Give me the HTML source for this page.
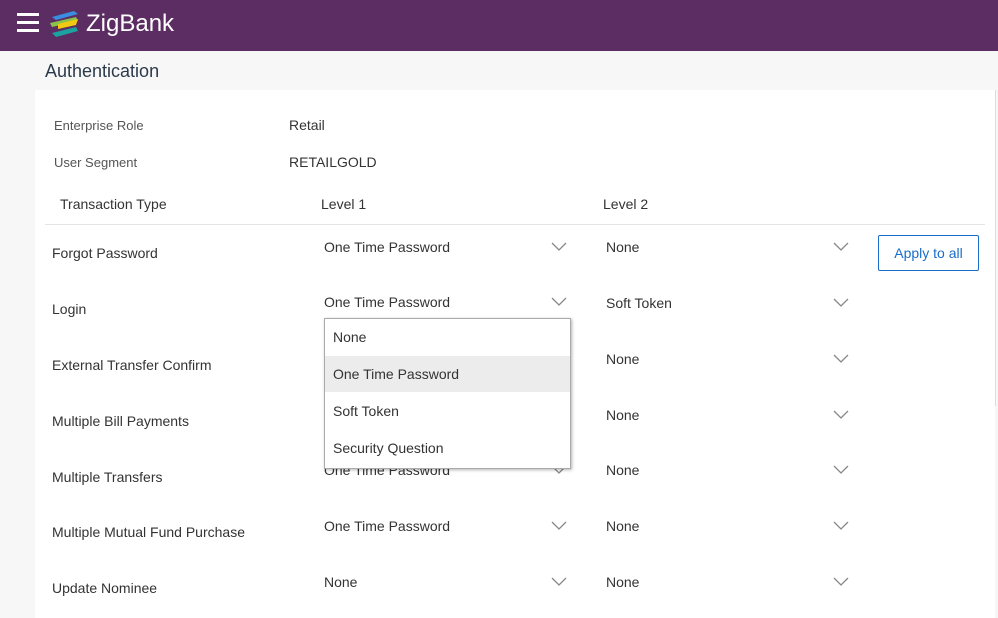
<!DOCTYPE html>
<html><head><style>
*{margin:0;padding:0;box-sizing:border-box}
body{width:998px;height:618px;overflow:hidden;background:#f7f7f7;font-family:"Liberation Sans",sans-serif;color:#333;position:relative}
.hdr{position:absolute;left:0;top:0;width:998px;height:51px;background:#5c2d62}
.t{position:absolute;white-space:nowrap}
.panel{position:absolute;left:35px;top:90px;width:960px;height:528px;background:#fff}
.dd{position:absolute;left:324px;top:318px;width:247px;height:151px;background:#fff;border:1px solid #aaa;box-shadow:1px 1px 3px rgba(0,0,0,.3)}
</style></head><body>
<div class="hdr">
<div style="position:absolute;left:17px;top:13px;width:22px;height:3px;background:#fff"></div>
<div style="position:absolute;left:17px;top:21px;width:22px;height:3px;background:#fff"></div>
<div style="position:absolute;left:17px;top:29px;width:22px;height:3px;background:#fff"></div>
<svg style="position:absolute;left:48px;top:9px" width="34" height="30" viewBox="0 0 34 30">
<path d="M4 8 L26 2 L30 5 L8 11Z" fill="#3a8ee0"/>
<path d="M2 14 L28 8 L30 12 L4 18Z" fill="#8bc34a"/>
<path d="M10 15 L30 10 L28 16 L10 20Z" fill="#f2c811"/>
<path d="M4 24 L28 18 L30 22 L8 28Z" fill="#1aa3a0"/>
</svg>
<div class="t" style="left:86px;top:10px;font-size:24px;color:#fff">ZigBank</div>
</div>
<div class="t" style="left:45px;top:61px;font-size:18px;color:#2b3a4a">Authentication</div>
<div class="panel"></div>
<div style="position:absolute;left:995px;top:90px;width:1px;height:316px;background:#ddd"></div>
<div class="t" style="left:54px;top:118px;font-size:13px;color:#555">Enterprise Role</div>
<div class="t" style="left:289px;top:117px;font-size:14px">Retail</div>
<div class="t" style="left:54px;top:155px;font-size:13px;color:#555">User Segment</div>
<div class="t" style="left:289px;top:154px;font-size:14px">RETAILGOLD</div>
<div class="t" style="left:60px;top:196px;font-size:14px">Transaction Type</div>
<div class="t" style="left:321px;top:196px;font-size:14px">Level 1</div>
<div class="t" style="left:603px;top:196px;font-size:14px">Level 2</div>
<div style="position:absolute;left:45px;top:224px;width:940px;height:1px;background:#e5e5e5"></div>
<div class="t" style="left:878px;top:235px;width:101px;height:36px;border:1px solid #1a6cc7;border-radius:2px;color:#1a6cc7;font-size:14px;text-align:center;line-height:34px">Apply to all</div>

<div class="t" style="left:52px;top:245px;font-size:14px">Forgot Password</div>
<div class="t" style="left:52px;top:301px;font-size:14px">Login</div>
<div class="t" style="left:52px;top:357px;font-size:14px">External Transfer Confirm</div>
<div class="t" style="left:52px;top:413px;font-size:14px">Multiple Bill Payments</div>
<div class="t" style="left:52px;top:469px;font-size:14px">Multiple Transfers</div>
<div class="t" style="left:52px;top:524px;font-size:14px">Multiple Mutual Fund Purchase</div>
<div class="t" style="left:52px;top:580px;font-size:14px">Update Nominee</div>

<div class="t" style="left:324px;top:239px;font-size:14px">One Time Password</div>
<div class="t" style="left:324px;top:294px;font-size:14px">One Time Password</div>
<div class="t" style="left:324px;top:462px;font-size:14px">One Time Password</div>
<div class="t" style="left:324px;top:518px;font-size:14px">One Time Password</div>
<div class="t" style="left:324px;top:574px;font-size:14px">None</div>

<div class="t" style="left:606px;top:239px;font-size:14px">None</div>
<div class="t" style="left:606px;top:295px;font-size:14px">Soft Token</div>
<div class="t" style="left:606px;top:351px;font-size:14px">None</div>
<div class="t" style="left:606px;top:407px;font-size:14px">None</div>
<div class="t" style="left:606px;top:462px;font-size:14px">None</div>
<div class="t" style="left:606px;top:518px;font-size:14px">None</div>
<div class="t" style="left:606px;top:574px;font-size:14px">None</div>

<svg style="position:absolute;left:0;top:0" width="998" height="618">
<g fill="none" stroke="#888" stroke-width="1.3">
<path d="M552 243 l7 7 l7 -7"/><path d="M552 298 l7 7 l7 -7"/><path d="M552 466 l7 7 l7 -7"/><path d="M552 522 l7 7 l7 -7"/><path d="M552 578 l7 7 l7 -7"/>
<path d="M834 243 l7 7 l7 -7"/><path d="M834 299 l7 7 l7 -7"/><path d="M834 355 l7 7 l7 -7"/><path d="M834 411 l7 7 l7 -7"/><path d="M834 466 l7 7 l7 -7"/><path d="M834 522 l7 7 l7 -7"/><path d="M834 578 l7 7 l7 -7"/>
</g></svg>

<div class="dd">
<div style="position:absolute;left:0;top:37px;width:245px;height:36px;background:#ececec"></div>
<div class="t" style="left:8px;top:10px;font-size:14px">None</div>
<div class="t" style="left:8px;top:47px;font-size:14px">One Time Password</div>
<div class="t" style="left:8px;top:84px;font-size:14px">Soft Token</div>
<div class="t" style="left:8px;top:121px;font-size:14px">Security Question</div>
</div>
</body></html>
